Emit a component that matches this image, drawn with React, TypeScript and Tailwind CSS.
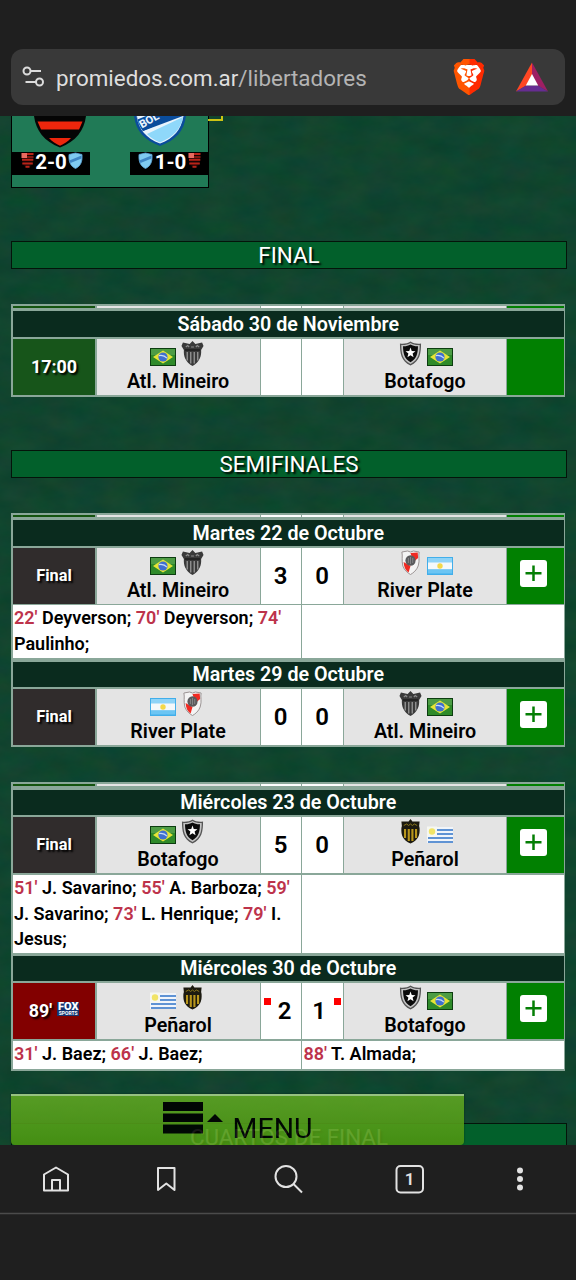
import React from "react";
import { SiBrave } from "react-icons/si";

type TeamKey = "mineiro" | "botafogo" | "river" | "penarol";
type FlagKey = "br" | "ar" | "uy";

const teams: Record<TeamKey, { name: string; flag: FlagKey }> = {
  mineiro: { name: "Atl. Mineiro", flag: "br" },
  botafogo: { name: "Botafogo", flag: "br" },
  river: { name: "River Plate", flag: "ar" },
  penarol: { name: "Peñarol", flag: "uy" },
};

function Flag({ code }: { code: FlagKey }) {
  if (code === "br")
    return (
      <svg className="h-[18px] w-[26px]" viewBox="0 0 26 18">
        <rect width="26" height="18" fill="#0c3d10" />
        <rect x="1" y="1" width="24" height="16" fill="#2f8a2a" />
        <rect x="1" y="1" width="24" height="6" fill="#4d9c45" />
        <path d="M13 2.5 23 9 13 15.5 3 9Z" fill="#e6e436" />
        <circle cx="13" cy="9" r="4.6" fill="#3f6fd0" />
        <path d="M9 7.6c3-.6 6 .4 8 2.6" stroke="#c8dcf8" strokeWidth="1.2" fill="none" />
      </svg>
    );
  if (code === "ar")
    return (
      <svg className="h-[18px] w-[26px]" viewBox="0 0 26 18">
        <rect width="26" height="18" fill="#41aeea" />
        <rect x="1" y="1" width="24" height="5" fill="#8ed3f7" />
        <rect x="1" y="5.5" width="24" height="7" fill="#f4f8fa" />
        <rect x="1" y="12.5" width="24" height="4" fill="#6cc5f3" />
        <circle cx="13" cy="9" r="2.7" fill="#f3d84a" />
      </svg>
    );
  return (
    <svg className="h-[18px] w-[26px]" viewBox="0 0 26 18">
      <rect y="1" width="26" height="16" fill="#f1f5fa" />
      <path d="M10 4h16M10 8h16M1 12h25M1 16h25" stroke="#5f93d4" strokeWidth="2" />
      <rect width="10" height="10.5" y="0.5" fill="#f6f7f2" />
      <circle cx="5" cy="5.5" r="3.2" fill="#f1e467" />
    </svg>
  );
}

function Crest({ team }: { team: TeamKey }) {
  if (team === "mineiro")
    return (
      <svg className="h-[25px] w-[23px]" viewBox="0 0 24 25" preserveAspectRatio="none">
        <path d="M12 0 15 3 22 1.500 23.500 5 21 9C21.500 15 19.500 21 12 25 4.500 21 2.500 15 3 9L0.500 5 2 1.500 9 3Z" fill="#3a3a3a" />
        <path d="M6.500 11v8.500M10.200 11v11.500M13.800 11v11.500M17.500 11v8.500" stroke="#9c9c9c" strokeWidth="1.300" />
        <path d="M5 6l2-1.500 1.500 1.500M10.500 6h3M15.500 6 17 4.500 19 6" stroke="#8c8c8c" strokeWidth="1.200" fill="none" />
        <path d="M4 9h16" stroke="#161616" strokeWidth="1.200" />
      </svg>
    );
  if (team === "botafogo")
    return (
      <svg className="h-[25px] w-[23px]" viewBox="0 0 24 25" preserveAspectRatio="none">
        <path d="M12 0.5C15 2.5 19 3 23 2.5 23 12 22 20 12 24.5 2 20 1 12 1 2.5 5 3 9 2.5 12 0.5Z" fill="#555" />
        <path d="M12 2C15 3.8 18.500 4.300 21.600 4 21.500 12 20.500 18.800 12 23 3.500 18.800 2.500 12 2.400 4 5.500 4.300 9 3.800 12 2Z" fill="#c4c4c4" />
        <path d="M12 3.600C14.500 5 17.500 5.500 19.800 5.300 19.700 12 18.600 17.800 12 21.300 5.400 17.800 4.300 12 4.200 5.300 6.500 5.500 9.500 5 12 3.600Z" fill="#0b0b0b" />
        <path d="m12 6.500 1.300 3.500 3.900.2-3 2.400 1 3.700L12 14.200l-3.200 2.100 1-3.700-3-2.400 3.900-.2Z" fill="#fff" />
      </svg>
    );
  if (team === "river")
    return (
      <svg className="h-[25px] w-[23px]" viewBox="0 0 24 25" preserveAspectRatio="none">
        <path d="M3 2 9 1 12 2 15 1 21 2C20 6 22 10 20 16 18.500 20 15 23 12 24.500 9 23 5.500 20 4 16 2.500 10 4 6 3 2Z" fill="#f4f4f4" stroke="#9a9292" strokeWidth="1" />
        <path d="M12 3 19.500 2.500 20 8 15 12Z" fill="#f02a22" />
        <path d="M4.800 12 12 16 10 22.500C7 20.500 5 17 4.800 12Z" fill="#f02a22" />
        <circle cx="12" cy="10.500" r="5.300" fill="#5a5a5c" />
        <path d="M9.800 8v5M12 7v7M14.300 8v5" stroke="#909092" strokeWidth="0.800" />
      </svg>
    );
  return (
    <svg className="h-[25px] w-[23px]" viewBox="0 0 24 25" preserveAspectRatio="none">
      <path d="M12 0 14 2.500 21.500 2.500 21 7 21.500 9C22 16 20 21.500 12 24.500 4 21.500 2 16 2.500 9L3 7 2.500 2.500 10 2.500Z" fill="#1c1a10" />
      <path d="M6.300 10v9M10.200 10v12M14 10v12M17.800 10v9" stroke="#b8961c" strokeWidth="2.200" />
      <path d="M5 6.500 8 5l2 1.500L12 5l2 1.500L16 5l3 1.500" stroke="#8c781c" strokeWidth="1" fill="none" />
    </svg>
  );
}

function MiniFlamengo() {
  return (
    <svg className="h-[17px] w-[13px]" viewBox="0 0 13 17">
      <path d="M0.500 1H12.500C12.500 9 12 14 6.500 16.500 1.500 14 .5 9 .5 1Z" fill="#150606" />
      <path d="M6 2h6.500M1 7.800h11.300M1.300 11.500h10.500M4.500 14.800h4" stroke="#b82318" strokeWidth="2" />
      <rect x="0.500" y="1" width="5.500" height="5" fill="#e86a60" />
      <path d="M6 5h6.500" stroke="#a51d14" strokeWidth="1.500" />
    </svg>
  );
}

function MiniBolivar() {
  return (
    <svg className="h-[17px] w-[15px]" viewBox="0 0 15 17">
      <path d="M1 2.500 7.500 1 14 2.500C14.500 9 13 14 7.500 16.500 2 14 .5 9 1 2.500Z" fill="#7fcaf0" stroke="#5ea6d8" strokeWidth="0.800" />
      <path d="M1.300 8.500 13.500 3.500v3L2.500 11Z" fill="#3f86c4" />
    </svg>
  );
}

function PlusBox() {
  return (
    <div className="mt-[12px] ml-[13px] flex size-[27px] items-center justify-center rounded-[3px] bg-white">
      <svg className="size-[27px]" viewBox="0 0 27 27">
        <path d="M13.500 5.500v15.500M5.500 13.300h16" stroke="#047f04" strokeWidth="2.500" />
      </svg>
    </div>
  );
}

function Sliver({ className }: { className: string }) {
  return (
    <div className={`flex ${className}`}>
      <div className="mr-[2px] w-[82px] shrink-0 bg-[#14540f]" />
      <div className="w-[163px] shrink-0 bg-[#e4e4e4]" />
      <div className="ml-px w-[40px] shrink-0 bg-white" />
      <div className="ml-px w-[41px] shrink-0 bg-white" />
      <div className="ml-px w-[162px] shrink-0 bg-[#e4e4e4]" />
      <div className="ml-px flex-1 bg-[#018001]" />
    </div>
  );
}

function DateRow({ children, className }: { children: React.ReactNode; className: string }) {
  return (
    <div className={`flex items-center justify-center bg-[#0a2b1e] pt-px text-[19.700px] leading-[24px] font-semibold text-white ${className}`}>
      {children}
    </div>
  );
}

function TeamCell({ team, away }: { team: TeamKey; away?: boolean }) {
  const flag = (
    <div className="mt-[7px]">
      <Flag code={teams[team].flag} />
    </div>
  );
  return (
    <div className={`flex h-full shrink-0 flex-col items-center bg-[#e4e4e4] pt-[2px] ${away ? "ml-px w-[162px]" : "w-[163px] pr-px"}`}>
      <div className={`flex h-[28px] items-start gap-[5px] ${away ? "pl-px" : "pr-[2px]"}`}>
        {away ? (
          <>
            <Crest team={team} />
            {flag}
          </>
        ) : (
          <>
            {flag}
            <Crest team={team} />
          </>
        )}
      </div>
      <div className="text-[19.700px] leading-[26px] font-semibold text-black">{teams[team].name}</div>
    </div>
  );
}

interface MatchProps {
  home: TeamKey;
  away: TeamKey;
  status: "time" | "final" | "live";
  score?: [number, number];
}

function MatchRow({ home, away, status, score }: MatchProps) {
  const live = status === "live";
  const statusBg = status === "time" ? "bg-[#17551a]" : live ? "bg-[#820000]" : "bg-[#302c2c]";
  return (
    <div className="flex h-[56px]">
      <div className={`mr-[2px] flex w-[82px] shrink-0 items-center justify-center font-bold text-white [text-shadow:2px_2px_2px_#000] ${statusBg}`}>
        {status === "time" && <span className="text-[17.900px]">17:00</span>}
        {status === "final" && <span className="text-[16.300px]">Final</span>}
        {live && (
          <span className="flex items-center gap-[5px]">
            <span className="text-[17.900px]">89'</span>
            <span className="mb-[3px] flex h-[14px] w-[22px] flex-col items-center overflow-hidden bg-[#14336f] [text-shadow:none]">
              <span className="text-[11px] leading-[9px] font-black">FOX</span>
              <span className="text-[5px] leading-[5px] font-bold">SPORTS</span>
            </span>
          </span>
        )}
      </div>
      <TeamCell team={home} />
      <div className="ml-px flex w-[40px] shrink-0 items-center justify-center bg-white pr-px text-[24px] font-semibold">
        {live && <span className="mr-[7px] mb-[20px] -ml-[6px] size-[7px] bg-[#fe0000]" />}
        {score && <span>{score[0]}</span>}
      </div>
      <div className="ml-px flex w-[41px] shrink-0 items-center justify-center bg-white pr-px text-[24px] font-semibold">
        {score && <span>{score[1]}</span>}
        {live && <span className="-mr-[9px] mb-[20px] ml-[8px] size-[7px] bg-[#fe0000]" />}
      </div>
      <TeamCell team={away} away />
      <div className="ml-px flex-1 bg-[#018001]">{status !== "time" && <PlusBox />}</div>
    </div>
  );
}

type Goal = [string, string];

function Goals({ home, away, className }: { home: Goal[]; away: Goal[]; className: string }) {
  const render = (goals: Goal[]) =>
    goals.map(([min, who], i) => (
      <React.Fragment key={i}>
        <span className="text-[#bd334b]">{min}'</span> {who};{" "}
      </React.Fragment>
    ));
  return (
    <div className={`flex text-[18px] leading-[25.500px] font-semibold text-black ${className}`}>
      <div className="mr-px w-[288px] bg-white pl-px">{render(home)}</div>
      <div className="flex-1 bg-white pl-[1.500px]">{render(away)}</div>
    </div>
  );
}

function Section({ children }: { children: React.ReactNode }) {
  return (
    <h2 className="ml-[11px] flex h-[28px] w-[556px] items-center justify-center border border-[#04140a] bg-[#02602b] text-[22.400px] leading-[25px] text-white [text-shadow:2px_2px_2px_#000]">
      {children}
    </h2>
  );
}

function Table({ children, className }: { children: React.ReactNode; className: string }) {
  return <div className={`ml-[11px] w-[554px] bg-[#8aa799] pr-[1.500px] pl-[2px] ${className}`}>{children}</div>;
}

function Grass() {
  return (
    <svg className="absolute inset-0 h-full w-full" aria-hidden="true">
      <filter id="grass" x="0" y="0" width="100%" height="100%" colorInterpolationFilters="sRGB">
        <feTurbulence type="fractalNoise" baseFrequency="0.03 0.05" numOctaves="5" seed="4" />
        <feColorMatrix values="0.080 0 0 0 0.025  0 0.050 0 0 0.243  0 0 0.050 0 0.157  0 0 0 0 1" />
      </filter>
      <rect width="100%" height="100%" filter="url(#grass)" />
    </svg>
  );
}

function TopCard() {
  return (
    <div className="relative ml-[11px] h-[72px] w-[198px] border-x border-b border-black bg-[#207a56]">
      <div className="flex h-[36px] justify-between">
        <svg className="ml-[21px] h-[32px] w-[54px]" viewBox="0 0 54 32">
          <path d="M1 0H53C51 15 43 25 27 31.500 11 25 3 15 1 0Z" fill="#050505" />
          <path d="M4.500 5.500H49.500L46 13.500H8Z" fill="#ee260c" />
          <path d="M16 22H38C35 25.500 31 28 27 29.800 23 28 19 25.500 16 22Z" fill="#ee260c" />
        </svg>
        <svg className="mr-[21px] h-[32px] w-[54px]" viewBox="0 0 54 32">
          <path d="M1 0H53C51 15 43 24 27 30 11 24 3 15 1 0Z" fill="#0a4d9c" />
          <path d="M3.500 0H50.500C48 14 41 22 27 27.600 13 22 6 14 3.500 0Z" fill="#e8f4fc" />
          <path d="M3.500 0H44L10 15C6 10 4.500 5 3.500 0Z" fill="#0a4d9c" />
          <path d="M14 18 50 1C48 13 40 21 27 26.500 22 24.500 17 21.500 14 18Z" fill="#8fd8fa" />
          <path d="M10 15 50 0H38L7 10Z" fill="#0a4d9c" />
          <path d="M4.500 3.500 13 0H4Z" fill="#e8f4fc" />
          <text x="9" y="12.500" transform="rotate(-30 9 12.500)" fontSize="11" fontWeight="800" fontFamily="Roboto" fill="#e8f4fc">BOL</text>
        </svg>
      </div>
      <div className="flex justify-between text-[20.500px] leading-[20px] font-bold text-white">
        <div className="flex h-[23px] w-[78px] items-start justify-center gap-[1.500px] bg-black pl-[2px]">
          <MiniFlamengo />
          <span>2-0</span>
          <MiniBolivar />
        </div>
        <div className="flex h-[23px] w-[78px] items-start justify-center gap-[1.500px] bg-black pl-px">
          <MiniBolivar />
          <span>1-0</span>
          <MiniFlamengo />
        </div>
      </div>
      <div className="absolute top-0 left-[196px] h-[5px] w-[15px] border-r-2 border-b-2 border-[#cdc414]" />
    </div>
  );
}

function AddressBar() {
  return (
    <header className="h-[116px] bg-[#1f1f1f] px-[11px] pt-[49px]">
      <div className="flex h-[56px] items-center rounded-[12px] bg-[#393939]">
        <svg className="ml-[11px] h-[24px] w-[24px]" viewBox="0 0 24 24" fill="none" stroke="#dcdcdc" strokeWidth="2">
          <circle cx="5" cy="6" r="3.500" />
          <path d="M8.500 6H19" />
          <circle cx="17.500" cy="17" r="3.500" />
          <path d="M3.500 17H14" />
        </svg>
        <div className="ml-[10px] w-[395px] shrink-0 pt-[3px] text-[22.400px] whitespace-nowrap text-[#dedede]">
          promiedos.com.ar<span className="text-[#b4b4b4]">/libertadores</span>
        </div>
        <div className="relative flex h-[36px] w-[36px] shrink-0 items-center justify-center">
          <div className="absolute top-[6px] left-[6px] h-[24px] w-[24px] rounded-b-[12px] bg-white" />
          <svg className="absolute size-0">
            <linearGradient id="lion" x1="0" x2="1">
              <stop offset="0.480" stopColor="#ff5500" />
              <stop offset="0.550" stopColor="#ff2a00" />
            </linearGradient>
          </svg>
          <SiBrave size={36} fill="url(#lion)" className="relative" />
        </div>
        <svg className="ml-[28px] h-[30px] w-[34px] shrink-0" viewBox="0 0 34 30">
          <path d="M17 0.500 1 29.500 11.500 23.500 17 13Z" fill="#ff4724" />
          <path d="M17 0.500 33 29.500 22.500 23.500 17 13Z" fill="#9e1f63" />
          <path d="M1 29.500H33L23 23.500H11Z" fill="#662d91" />
          <path d="M17 12 23.200 23.500H10.800Z" fill="#fff" />
        </svg>
      </div>
    </header>
  );
}

function BottomBar() {
  return (
    <footer className="relative h-[135px] bg-[#1f1f1f]">
      <svg className="block h-[135px] w-[576px]" viewBox="0 1145 576 135" fill="none" stroke="#e2e2e2" strokeWidth="2">
        <path d="M44 1174.500 56 1167.500 68 1174.500V1190.500H44ZM52 1190.500V1180H60V1190.500" strokeLinejoin="round" />
        <path d="M158 1168H174.500V1190L166.300 1183.500 158 1190Z" strokeLinejoin="round" />
        <circle cx="286" cy="1176.500" r="10.500" />
        <path d="M293.500 1184 302 1192.500" />
        <rect x="396.500" y="1166" width="26.500" height="26.500" rx="4" />
        <g fill="#e2e2e2" stroke="none">
          <circle cx="520" cy="1170.500" r="3" />
          <circle cx="520" cy="1179" r="3" />
          <circle cx="520" cy="1187.500" r="3" />
        </g>
        <path d="M0 1213.500H576" stroke="#4b4b4b" strokeWidth="1.500" />
      </svg>
      <span className="absolute top-[23px] left-[396px] w-[27px] text-center text-[17px] leading-[22px] font-semibold text-[#e2e2e2]">1</span>
    </footer>
  );
}

export default function App() {
  return (
    <div className="flex h-[1280px] w-[576px] flex-col overflow-hidden bg-[#1f1f1f] font-[Roboto,sans-serif]">
      <AddressBar />
      <main className="relative h-[1029px] overflow-hidden bg-[#10452f]">
        <Grass />
        <div className="relative">
          <TopCard />
          <div className="h-[53px]" />
          <Section>FINAL</Section>
          <Table className="mt-[35px] h-[93px] pt-[1.500px]">
            <Sliver className="h-[2.500px]" />
            <DateRow className="mt-[3px] mb-[2px] h-[26px]">Sábado 30 de Noviembre</DateRow>
            <MatchRow home="mineiro" away="botafogo" status="time" />
          </Table>
          <div className="h-[53px]" />
          <Section>SEMIFINALES</Section>
          <Table className="mt-[35px] h-[234px] pt-[1.500px]">
            <Sliver className="h-[2.500px]" />
            <DateRow className="mt-[3px] mb-[2px] h-[26px]">Martes 22 de Octubre</DateRow>
            <MatchRow home="mineiro" away="river" status="final" score={[3, 0]} />
            <Goals
              className="mt-px h-[53px]"
              home={[["22", "Deyverson"], ["70", "Deyverson"], ["74", "Paulinho"]]}
              away={[]}
            />
            <DateRow className="mt-[4px] mb-[2px] h-[25px]">Martes 29 de Octubre</DateRow>
            <MatchRow home="river" away="mineiro" status="final" score={[0, 0]} />
          </Table>
          <Table className="mt-[35px] h-[289px] pt-[1.500px]">
            <Sliver className="h-[2.500px]" />
            <DateRow className="mt-[4px] mb-[2px] h-[25px]">Miércoles 23 de Octubre</DateRow>
            <MatchRow home="botafogo" away="penarol" status="final" score={[5, 0]} />
            <Goals
              className="mt-[2px] h-[78px]"
              home={[["51", "J. Savarino"], ["55", "A. Barboza"], ["59", "J. Savarino"], ["73", "L. Henrique"], ["79", "I. Jesus"]]}
              away={[]}
            />
            <DateRow className="mt-[3px] mb-[2px] h-[25px]">Miércoles 30 de Octubre</DateRow>
            <MatchRow home="penarol" away="botafogo" status="live" score={[2, 1]} />
            <Goals className="mt-[2px] h-[28px]" home={[["31", "J. Baez"], ["66", "J. Baez"]]} away={[["88", "T. Almada"]]} />
          </Table>
          <div className="h-[52px]" />
          <Section>CUARTOS DE FINAL</Section>
        </div>
        <nav className="absolute bottom-0 left-[11px] flex h-[51px] w-[453px] justify-center rounded-t-[18px/3px] rounded-b-[4px] border-t-2 border-[#a5cf8a] bg-linear-to-b from-[#5ea523] to-[#4c9410] opacity-90 shadow-[0_0_2px_#0008]">
          <svg className="mt-[6px] h-[34px] w-[64px]" viewBox="0 0 64 34">
            <path d="M0 0H40V9H0ZM0 11.500H40V20H0ZM0 22.500H40V31.500H0ZM44 20 52 12 60 20Z" fill="#000" />
          </svg>
          <span className="mt-[13px] ml-[6px] text-[28.500px] leading-[40px] text-black">MENU</span>
        </nav>
      </main>
      <BottomBar />
    </div>
  );
}
